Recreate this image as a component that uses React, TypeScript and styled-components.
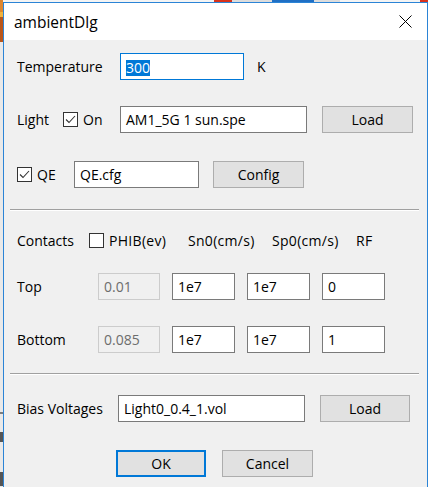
import styled, { createGlobalStyle } from 'styled-components';

const GlobalStyle = createGlobalStyle`
  html, body {
    margin: 0;
    padding: 0;
    width: 428px;
    height: 487px;
    overflow: hidden;
    background: #f0f0f0;
  }
  * {
    box-sizing: border-box;
  }
`;

const Page = styled.div`
  display: flex;
  flex-direction: column;
  width: 428px;
  height: 487px;
  font-family: 'Open Sans', 'Noto Sans', sans-serif;
  font-size: 14px;
  color: #000;
`;

const TopStrip = styled.div`
  height: 2px;
  flex-shrink: 0;
  background: linear-gradient(
    to right,
    #d9822b 0 3px,
    #f4f4f4 3px 214px,
    #d8321c 214px 232px,
    #dcdcdc 232px 272px,
    #1f6fc4 272px 314px,
    #dcdcdc 314px 340px,
    #f4f4f4 340px 420px,
    #d8321c 420px
  );
`;

const Body = styled.div`
  display: flex;
  flex: 1;
  min-height: 0;
`;

const LeftStrip = styled.div`
  width: 3px;
  flex-shrink: 0;
  background: linear-gradient(
    to bottom,
    #e0872e 0 10px,
    #f2b23c 10px 15px,
    #b9561a 15px 40px,
    #e9e9e9 40px 410px,
    #7d7d7d 410px 412px,
    #e9e9e9 412px 430px,
    #555 430px 440px,
    #e9e9e9 440px 470px,
    #555 470px 484px,
    #e9e9e9 484px
  );
`;

const Dialog = styled.div`
  flex: 1;
  display: flex;
  flex-direction: column;
  border: 1px solid #2b84d6;
  border-bottom: none;
  background: #f0f0f0;
`;

const TitleBar = styled.div`
  height: 37px;
  flex-shrink: 0;
  display: flex;
  align-items: center;
  justify-content: space-between;
  background: #fff;
  padding-left: 10px;
`;

const Title = styled.span`
  font-size: 15.5px;
  color: #000;
`;

const CloseButton = styled.div`
  width: 44px;
  height: 37px;
  display: flex;
  align-items: center;
  justify-content: center;
`;

const Client = styled.div`
  display: flex;
  flex-direction: column;
  padding: 0 8px 0 6px;
`;

const Row = styled.div<{ $top: number }>`
  display: flex;
  align-items: center;
  height: 27px;
  margin-top: ${(p) => p.$top}px;
  padding-left: 7px;
`;

const Label = styled.span<{ $w: number }>`
  width: ${(p) => p.$w}px;
  flex-shrink: 0;
  white-space: nowrap;
`;

const Unit = styled.span`
  margin-left: 13px;
`;

const CheckItem = styled.div<{ $w?: number }>`
  display: flex;
  align-items: center;
  gap: 5px;
  width: ${(p) => (p.$w ? `${p.$w}px` : 'auto')};
  flex-shrink: 0;
  white-space: nowrap;
`;

const Box = styled.span`
  width: 15px;
  height: 15px;
  border: 1px solid #333;
  background: #fff;
  display: flex;
  align-items: center;
  justify-content: center;
`;

const Field = styled.div<{ $w: number; $focused?: boolean; $disabled?: boolean }>`
  width: ${(p) => p.$w}px;
  height: 27px;
  flex-shrink: 0;
  border: 1px solid
    ${(p) => (p.$focused ? '#0078d7' : p.$disabled ? '#cccccc' : '#7a7a7a')};
  background: ${(p) => (p.$disabled ? '#f0f0f0' : '#fff')};
  color: ${(p) => (p.$disabled ? '#6d6d6d' : '#000')};
  padding-left: 5px;
  line-height: 25px;
  white-space: nowrap;
  overflow: hidden;
`;

const Selected = styled.span`
  display: inline-block;
  background: #0078d7;
  color: #fff;
  line-height: 16px;
  vertical-align: middle;
`;

const Button = styled.div<{ $w: number; $gap?: number; $default?: boolean }>`
  width: ${(p) => p.$w}px;
  height: 27px;
  flex-shrink: 0;
  margin-left: ${(p) => p.$gap ?? 0}px;
  border: ${(p) => (p.$default ? '2px solid #0078d7' : '1px solid #adadad')};
  background: #e1e1e1;
  display: flex;
  align-items: center;
  justify-content: center;
`;

const Separator = styled.div<{ $top: number }>`
  margin-top: ${(p) => p.$top}px;
  height: 2px;
  border-top: 1px solid #a0a0a0;
  border-bottom: 1px solid #ffffff;
`;

const Heading = styled.span<{ $w?: number }>`
  width: ${(p) => (p.$w ? `${p.$w}px` : 'auto')};
  flex-shrink: 0;
  white-space: nowrap;
  letter-spacing: 0.3px;
`;

const Fields = styled.div`
  display: flex;
  gap: 12px;
`;

const Footer = styled.div`
  display: flex;
  justify-content: center;
  gap: 16px;
  margin-top: 28px;
`;

const CheckBox = ({ checked }: { checked?: boolean }) => (
  <Box>
    {checked && (
      <svg width="13" height="13" viewBox="0 0 13 13">
        <polyline
          points="2,6.5 5,9.5 11,3"
          fill="none"
          stroke="#333"
          strokeWidth="1.1"
        />
      </svg>
    )}
  </Box>
);

const ContactRow = ({
  name,
  top,
  values,
}: {
  name: string;
  top: number;
  values: string[];
}) => (
  <Row $top={top}>
    <Label $w={81}>{name}</Label>
    <Fields>
      <Field $w={62} $disabled>
        {values[0]}
      </Field>
      <Field $w={63}>{values[1]}</Field>
      <Field $w={63}>{values[2]}</Field>
      <Field $w={63}>{values[3]}</Field>
    </Fields>
  </Row>
);

export default function App() {
  return (
    <Page>
      <GlobalStyle />
      <TopStrip />
      <Body>
        <LeftStrip />
        <Dialog>
          <TitleBar>
            <Title>ambientDlg</Title>
            <CloseButton>
              <svg width="13" height="13" viewBox="0 0 13 13">
                <path d="M0.5 0.5 L12.5 12.5 M12.5 0.5 L0.5 12.5" stroke="#000" strokeWidth="1" />
              </svg>
            </CloseButton>
          </TitleBar>
          <Client>
            <Row $top={13}>
              <Label $w={103}>Temperature</Label>
              <Field $w={124} $focused>
                <Selected>300</Selected>
              </Field>
              <Unit>K</Unit>
            </Row>

            <Row $top={26}>
              <Label $w={46}>Light</Label>
              <CheckItem $w={57}>
                <CheckBox checked />
                On
              </CheckItem>
              <Field $w={187}>AM1_5G 1 sun.spe</Field>
              <Button $w={91} $gap={15}>
                Load
              </Button>
            </Row>

            <Row $top={28}>
              <CheckItem $w={57}>
                <CheckBox checked />
                QE
              </CheckItem>
              <Field $w={125}>QE.cfg</Field>
              <Button $w={91} $gap={14}>
                Config
              </Button>
            </Row>

            <Separator $top={21} />

            <Row $top={16}>
              <Label $w={72}>Contacts</Label>
              <CheckItem $w={99}>
                <CheckBox />
                <Heading>PHIB(ev)</Heading>
              </CheckItem>
              <Heading $w={84}>Sn0(cm/s)</Heading>
              <Heading $w={84}>Sp0(cm/s)</Heading>
              <Heading>RF</Heading>
            </Row>

            <ContactRow name="Top" top={19} values={['0.01', '1e7', '1e7', '0']} />
            <ContactRow name="Bottom" top={26} values={['0.085', '1e7', '1e7', '1']} />

            <Separator $top={20} />

            <Row $top={20}>
              <Label $w={101}>Bias Voltages</Label>
              <Field $w={187}>Light0_0.4_1.vol</Field>
              <Button $w={90} $gap={15}>
                Load
              </Button>
            </Row>

            <Footer>
              <Button $w={90} $default>
                OK
              </Button>
              <Button $w={91}>Cancel</Button>
            </Footer>
          </Client>
        </Dialog>
      </Body>
    </Page>
  );
}
